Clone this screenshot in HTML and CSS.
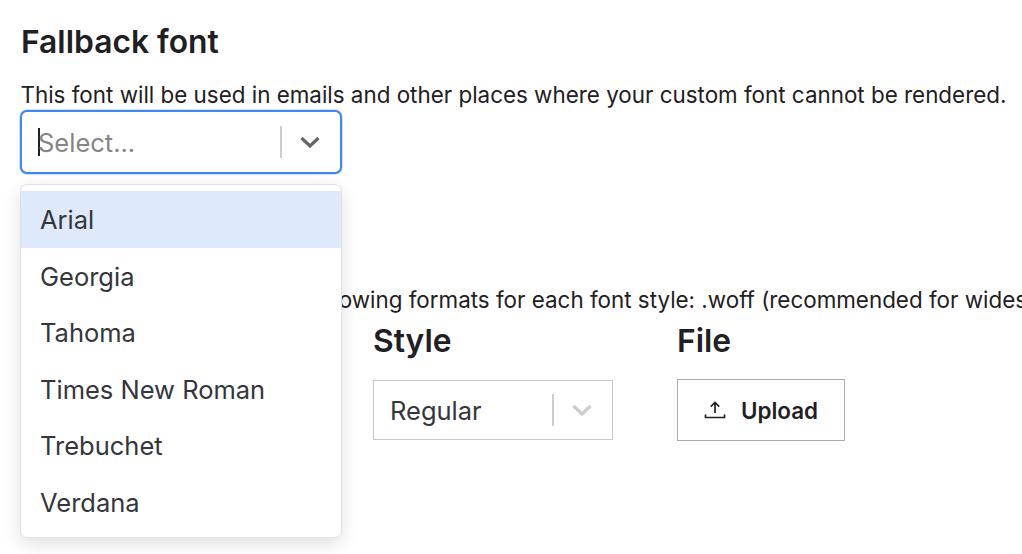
FILE: index.html
```html
<!DOCTYPE html>
<html lang="en">

<head>
    <meta charset="UTF-8">
    <meta name="viewport" content="width=device-width, initial-scale=1.0">
    <title>Fallback font</title>
    <link rel="stylesheet" href="styles.css">
</head>

<body>

    <section class="fallback">
        <h2 class="section-title">Fallback font</h2>
        <p class="section-text">This font will be used in emails and other places where your custom font cannot be rendered.</p>
        <div class="select-wrap">
            <div class="select select-focused">
                <div class="select-value">
                    <span class="caret"></span>
                    <span class="placeholder">Select...</span>
                </div>
                <span class="select-divider"></span>
                <svg class="chevron" width="20" height="20" viewBox="0 0 20 20">
                    <path d="M1.5 6 L10 14 L18.5 6" fill="none" stroke="#666" stroke-width="3.2"/>
                </svg>
            </div>
            <ul class="menu">
                <li class="menu-item menu-item-active">Arial</li>
                <li class="menu-item">Georgia</li>
                <li class="menu-item">Tahoma</li>
                <li class="menu-item">Times New Roman</li>
                <li class="menu-item">Trebuchet</li>
                <li class="menu-item">Verdana</li>
            </ul>
        </div>
    </section>

    <section class="custom">
        <p class="custom-text">Upload your font file in the following formats for each font style: .woff (recommended for widespread browser support)</p>
        <div class="upload-row">
            <div class="field field-name"></div>
            <div class="field field-style">
                <h3 class="field-label">Style</h3>
                <div class="select select-disabled">
                    <div class="select-value">Regular</div>
                    <span class="select-divider"></span>
                    <svg class="chevron" width="20" height="20" viewBox="0 0 20 20">
                        <path d="M1.5 6 L10 14 L18.5 6" fill="none" stroke="#ccc" stroke-width="3.2"/>
                    </svg>
                </div>
            </div>
            <div class="field">
                <h3 class="field-label">File</h3>
                <button class="upload-btn">
                    <svg width="22" height="22" viewBox="0 0 22 22">
                        <path d="M11 14 V3.5 M6.8 7.6 L11 3.4 L15.2 7.6 M1.5 15.5 V18.5 H20.5 V15.5" fill="none" stroke="#1f2024" stroke-width="1.7"/>
                    </svg>
                    Upload
                </button>
            </div>
        </div>
    </section>

</body>

</html>
```

FILE: styles.css
```css
html,
body {
    height: 100%;
}

body {
    margin: 0;
    padding: 0 20px;
    overflow: hidden;
    background: #ffffff;
    font-family: 'Inter', sans-serif;
    color: #1f2024;
    box-sizing: border-box;
}

.fallback {
    padding-top: 22px;
}

.section-title {
    margin: 0 0 0 1px;
    font-size: 31.8px;
    line-height: 40px;
    font-weight: 600;
}

.section-text {
    margin: 18px 0 0 0.5px;
    font-size: 22.4px;
    line-height: 30px;
    white-space: nowrap;
}

.select-wrap {
    position: relative;
    width: 322px;
}

.select {
    display: flex;
    align-items: center;
    box-sizing: border-box;
    background: #ffffff;
}

.select-focused {
    height: 64px;
    border: 2px solid #4286f0;
    border-radius: 7px;
    padding-right: 20px;
    box-shadow: 0 0 0 0.5px rgba(66, 134, 240, 0.5);
}

.select-value {
    flex: 1;
    display: flex;
    align-items: center;
    font-size: 25.5px;
}

.caret {
    width: 2px;
    height: 28px;
    background: #1f2024;
    margin-left: 16px;
}

.placeholder {
    margin-left: -2px;
    color: #858585;
}

.select-divider {
    width: 2px;
    height: 32px;
    background: #cccccc;
    margin-right: 18px;
}

.menu {
    position: absolute;
    top: 74px;
    left: 0;
    width: 322px;
    box-sizing: border-box;
    margin: 0;
    padding: 6.4px 0 7px;
    list-style: none;
    background: #ffffff;
    border: 1px solid #e2e2e2;
    border-radius: 7px;
    box-shadow: 0 6px 18px rgba(0, 0, 0, 0.12);
}

.menu-item {
    height: 56.5px;
    padding-left: 19px;
    display: flex;
    align-items: center;
    font-size: 25.5px;
    color: #35363c;
}

.menu-item-active {
    background: #dee9fb;
}

.custom {
    margin-top: 112px;
}

.custom-text {
    margin: 0;
    font-size: 22.4px;
    line-height: 28px;
    white-space: nowrap;
}

.upload-row {
    display: flex;
    margin-top: 7px;
}

.field-name {
    width: 353px;
}

.field-style {
    width: 304px;
}

.field-label {
    margin: 0 0 19px;
    font-size: 31.8px;
    line-height: 40px;
    font-weight: 600;
}

.select-disabled {
    width: 240px;
    height: 60px;
    border: 1px solid #c8c8c8;
    padding-left: 16px;
    padding-right: 20px;
    color: #35363c;
}

.upload-btn {
    display: flex;
    align-items: center;
    gap: 15px;
    width: 168px;
    height: 62px;
    padding: 0 0 0 26px;
    margin-top: -1px;
    box-sizing: border-box;
    border: 1px solid #a9acb5;
    background: #ffffff;
    font-family: 'Inter', sans-serif;
    font-size: 22.4px;
    font-weight: 600;
    color: #1f2024;
}
```
